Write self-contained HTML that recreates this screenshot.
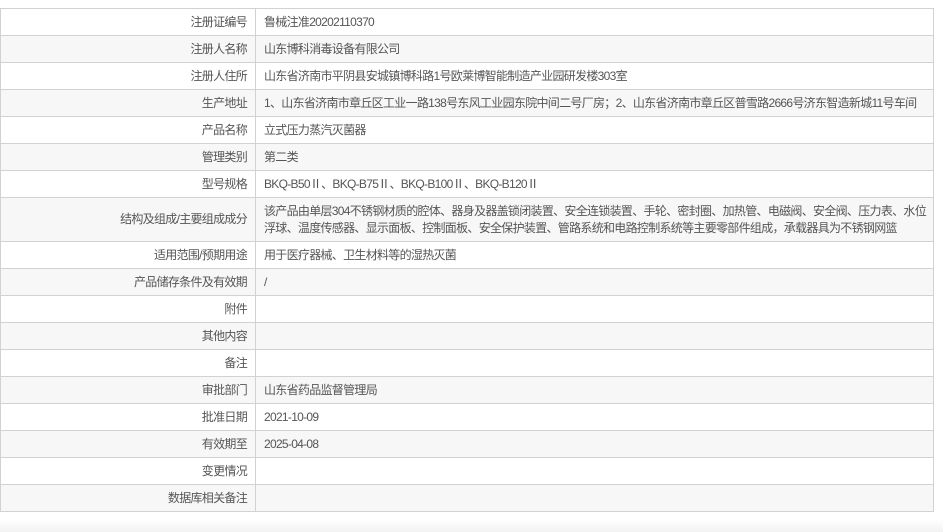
<!DOCTYPE html><html><head><meta charset="utf-8"><style>
body{margin:0;background:#fff;width:943px;height:532px;overflow:hidden;font-family:"Liberation Sans","Noto Sans CJK SC",sans-serif;font-size:12px;color:#555}
table{position:absolute;left:0;top:8px;width:934px;border-collapse:collapse;border:1px solid #d2d2d2;table-layout:fixed}
td{border:1px solid #d2d2d2;height:26px;padding:0 0 0 8px;line-height:17px;white-space:nowrap;overflow:hidden;letter-spacing:-0.7px}
td.l{width:238px;text-align:right;padding:0 8px 0 0}
tr:nth-child(even){background:#f7f7f7}
tr.big td{height:43px}
.sh{position:absolute;left:0;top:520px;width:943px;height:12px;background:linear-gradient(#fff,#f3f3f3)}
</style></head><body>
<table>
<colgroup><col style="width:255px"><col></colgroup>
<tr><td class="l">注册证编号</td><td>鲁械注准20202110370</td></tr>
<tr><td class="l">注册人名称</td><td>山东博科消毒设备有限公司</td></tr>
<tr><td class="l">注册人住所</td><td>山东省济南市平阴县安城镇博科路1号欧莱博智能制造产业园研发楼303室</td></tr>
<tr><td class="l">生产地址</td><td>1、山东省济南市章丘区工业一路138号东风工业园东院中间二号厂房；2、山东省济南市章丘区普雪路2666号济东智造新城11号车间</td></tr>
<tr><td class="l">产品名称</td><td>立式压力蒸汽灭菌器</td></tr>
<tr><td class="l">管理类别</td><td>第二类</td></tr>
<tr><td class="l">型号规格</td><td>BKQ-B50Ⅱ、BKQ-B75Ⅱ、BKQ-B100Ⅱ、BKQ-B120Ⅱ</td></tr>
<tr class="big"><td class="l">结构及组成/主要组成成分</td><td>该产品由单层304不锈钢材质的腔体、器身及器盖锁闭装置、安全连锁装置、手轮、密封圈、加热管、电磁阀、安全阀、压力表、水位<br>浮球、温度传感器、显示面板、控制面板、安全保护装置、管路系统和电路控制系统等主要零部件组成，承载器具为不锈钢网篮</td></tr>
<tr><td class="l">适用范围/预期用途</td><td>用于医疗器械、卫生材料等的湿热灭菌</td></tr>
<tr><td class="l">产品储存条件及有效期</td><td>/</td></tr>
<tr><td class="l">附件</td><td></td></tr>
<tr><td class="l">其他内容</td><td></td></tr>
<tr><td class="l">备注</td><td></td></tr>
<tr><td class="l">审批部门</td><td>山东省药品监督管理局</td></tr>
<tr><td class="l">批准日期</td><td>2021-10-09</td></tr>
<tr><td class="l">有效期至</td><td>2025-04-08</td></tr>
<tr><td class="l">变更情况</td><td></td></tr>
<tr><td class="l">数据库相关备注</td><td></td></tr>
</table>
<div class="sh"></div>
</body></html>
